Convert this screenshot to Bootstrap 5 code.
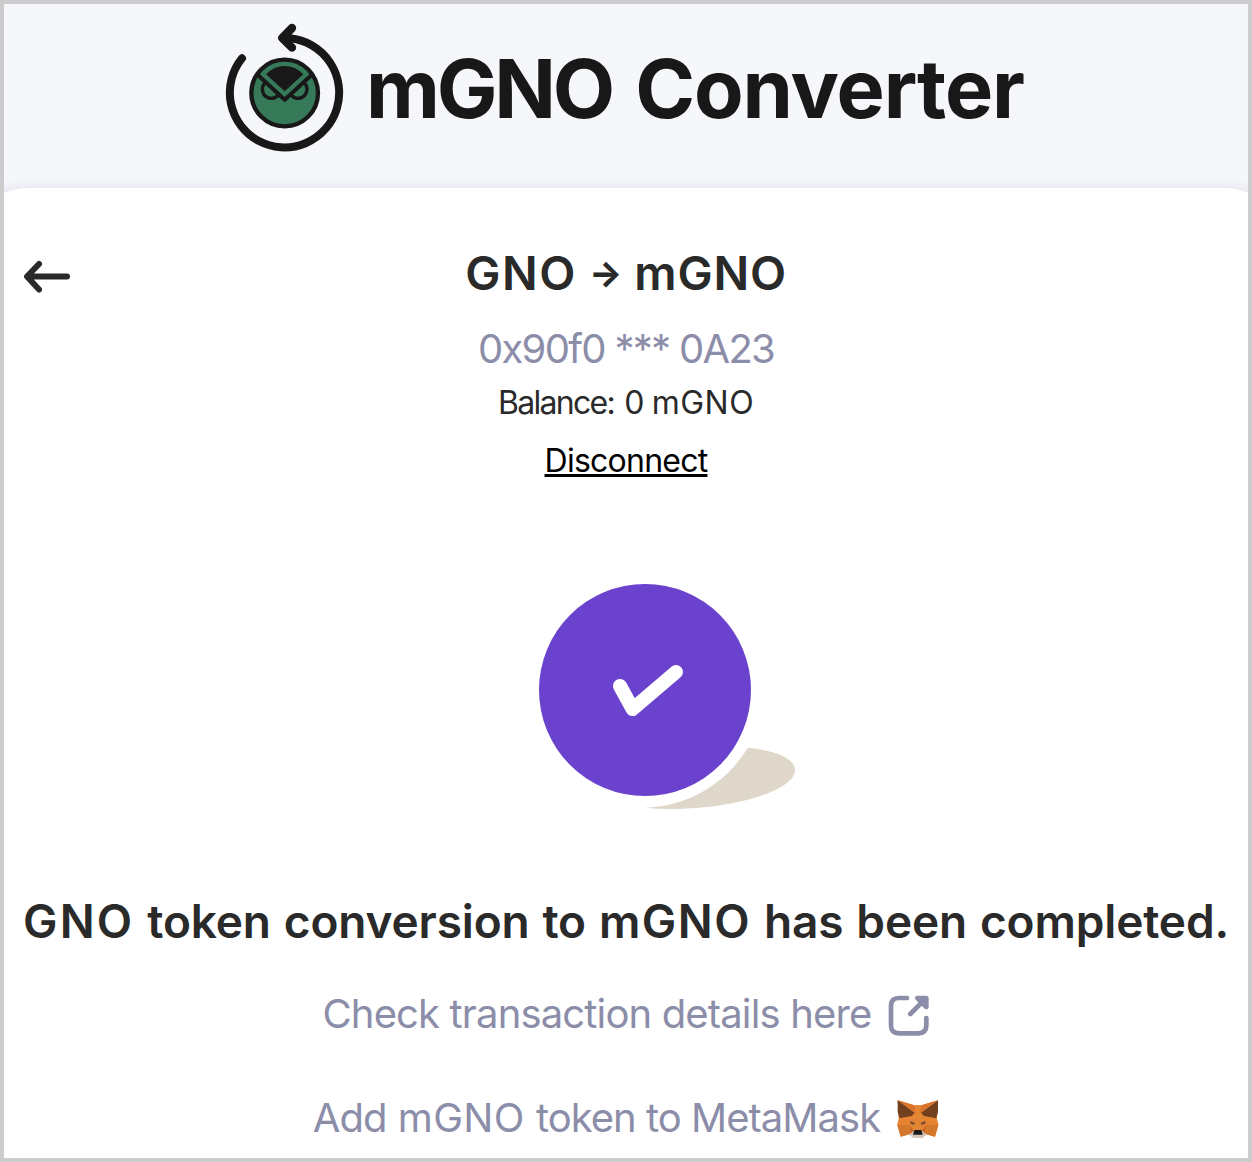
<!DOCTYPE html>
<html lang="en">
<head>
<meta charset="utf-8">
<meta name="viewport" content="width=device-width, initial-scale=1">
<title>mGNO Converter</title>
<link href="https://cdn.jsdelivr.net/npm/bootstrap@5.3.0/dist/css/bootstrap.min.css" rel="stylesheet">
<style>
body{font-family:Inter,"Liberation Sans",sans-serif;color:#2a2a2a;background:#f6f7fb}
.app-frame{height:1162px;border:4px solid #ccc;background:#f6f7fb}
.app-head{height:184px;padding:11px 0 0 211px}
.brand-name{font-size:81px;font-weight:700;line-height:96px;color:#181818;margin:2px 0 0 11px;letter-spacing:-1.1px}
.brand-name .unit{letter-spacing:-3.2px;margin-right:5px}
.panel{height:970px;margin:0 -36px;padding:57px 36px 0;background:#fff;border-radius:60px 60px 0 0;box-shadow:0 0 14px rgba(60,60,100,.12)}
.title-row{display:grid;grid-template-columns:1fr auto 1fr}
.back-btn{margin:14px 0 0 16px;width:54px;height:36px}
.pair{font-size:47px;line-height:56px;font-weight:600;gap:12px}
.pair .from{letter-spacing:1.6px}
.pair .to{letter-spacing:.8px}
.pair .dir{font-size:35px;font-weight:800}
.addr{font-size:40px;line-height:48px;margin-top:24px;letter-spacing:-1.7px;color:#8b8da9}
.bal{font-size:32px;line-height:40px;margin-top:10px;letter-spacing:-.85px}
.bal .lbl{letter-spacing:-1.7px;margin-right:2px}
.bal .unit{letter-spacing:.5px}
.disc{font-size:32px;line-height:40px;margin-top:18px;letter-spacing:-.75px;color:#000;text-decoration:underline;text-decoration-thickness:3px;text-underline-offset:2px;text-decoration-skip-ink:none}
.result-art{width:280px;height:250px;margin:89px 0 0 526px}
.done-text{font-size:46px;line-height:60px;font-weight:600;letter-spacing:-.15px;word-spacing:1.5px;margin-top:71px}
.done-text .from{letter-spacing:2.2px}
.done-text .to{letter-spacing:1.5px}
.act{font-size:40px;line-height:48px;color:#8b8da9;letter-spacing:-.85px;gap:16px}
.act svg{margin-top:4px}
.act-details{margin-top:39px}
.act-wallet{margin-top:56px;letter-spacing:-.97px}
.act-wallet .unit{letter-spacing:.3px;margin:0 1px}
</style>
<script src="https://cdn.jsdelivr.net/npm/bootstrap@5.3.0/dist/js/bootstrap.bundle.min.js"></script>
</head>
<body>
<div class="app-frame overflow-hidden">
<header class="app-head d-flex align-items-start">
  <div class="d-flex align-items-center">
    <svg width="140" height="145" viewBox="0 0 420 435" fill="none" stroke="#181818" stroke-linecap="round" stroke-linejoin="round">
      <path d="M81 130A164 164 0 1 0 225 70H206" stroke-width="24"/>
      <path d="M231 39L202 69L231 98" stroke-width="25"/>
      <circle cx="209" cy="234" r="100" fill="#367a5a" stroke="none"/>
      <circle cx="169" cy="223" r="27" stroke-width="10"/>
      <circle cx="249" cy="223" r="27" stroke-width="10"/>
      <path d="M131 182L209 255L287 182C270 150 240 138 209 138S148 150 131 182Z" fill="#367a5a" stroke="none"/>
      <path d="M131 182L209 254L287 182" stroke-width="12"/>
      <circle cx="209" cy="234" r="100" stroke-width="13"/>
      <path d="M153 178Q177 153 209 153T265 178L209 229Z" fill="#181818" stroke="none"/>
    </svg>
    <h1 class="brand-name text-nowrap mb-0"><span class="unit">mGNO</span> Converter</h1>
  </div>
</header>
<main class="panel text-center">
  <div class="title-row">
    <a href="#" class="back-btn d-block lh-1" aria-label="Back"><svg width="54" height="36" viewBox="20 259 54 36" fill="none" stroke="#2a2a2a" stroke-width="6" stroke-linecap="round" stroke-linejoin="round"><path d="M39 264L27 276.5L39 289.5M28 276.5H67"/></svg></a>
    <div class="pair d-flex justify-content-center"><span class="from">GNO</span><span class="dir">→</span><span class="to">mGNO</span></div>
  </div>
  <div class="addr">0x90f0 *** 0A23</div>
  <div class="bal"><span class="lbl">Balance:</span> 0 <span class="unit">mGNO</span></div>
  <a href="#" class="disc d-block">Disconnect</a>
  <svg class="result-art d-block" viewBox="0 0 840 750">
    <path d="M653 534C735 540 795 566 795 600C795 660 620 717 420 717Q380 717 345 713A373 373 0 0 0 653 534Z" fill="#dfd7ca"/>
    <circle cx="345" cy="360" r="318" fill="#6a42ce"/>
    <path d="M270 348L308 417L438 306" fill="none" stroke="#fff" stroke-width="42" stroke-linecap="round" stroke-linejoin="round"/>
  </svg>
  <h2 class="done-text text-nowrap mb-0"><span class="from">GNO</span> token conversion to <span class="to">mGNO</span> has been completed.</h2>
  <div class="act act-details d-flex justify-content-center align-items-center"><span>Check transaction details here</span>
    <svg width="42" height="42" viewBox="25 31 126 126" fill="none" stroke="#8b8da9" stroke-width="14" stroke-linecap="round" stroke-linejoin="round"><path d="M82 40H58Q34 40 34 64V122Q34 146 58 146H116Q140 146 140 122V100M92 88L138 42"/><path d="M113 40H140V67Z" fill="#8b8da9"/></svg>
  </div>
  <div class="act act-wallet d-flex justify-content-center align-items-center"><span>Add <span class="unit">mGNO</span> token to MetaMask</span>
    <svg width="43" height="42" viewBox="34 31 129 126">
      <path d="M39 35L89 50H110L160 35L157 90L161 109L151 144L125 137L113 147H86L74 137L48 144L38 109L42 90Z" fill="#e07f2e"/>
      <path d="M89 50H110L116 82L123 110L111 128H88L76 110L83 82Z" fill="#e38532"/>
      <path d="M39 35L90 72L80 83L45 89L39 70ZM160 35L109 72L119 83L154 89L160 70Z" fill="#70401f"/>
      <path d="M39 35L89 50L94 75ZM160 35L110 50L105 75Z" fill="#d9742d"/>
      <path d="M45 89L80 83L86 104L72 109L38 109ZM154 89L119 83L113 104L127 109L161 109Z" fill="#e58332"/>
      <path d="M38 109H72L74 137L48 144ZM161 109H127L125 137L151 144Z" fill="#d5782c"/>
      <path d="M74 109L88 126L77 137ZM125 109L111 126L122 137Z" fill="#c96a2a"/>
      <path d="M76 96L91 103L88 109L78 105ZM123 96L108 103L111 109L121 105Z" fill="#744c38"/>
      <path d="M74 137L88 127H111L125 137L113 148H86Z" fill="#d3c6b8"/>
      <path d="M89 124H110L114 138H85Z" fill="#17191b"/>
    </svg>
  </div>
</main>
</div>
</body>
</html>
